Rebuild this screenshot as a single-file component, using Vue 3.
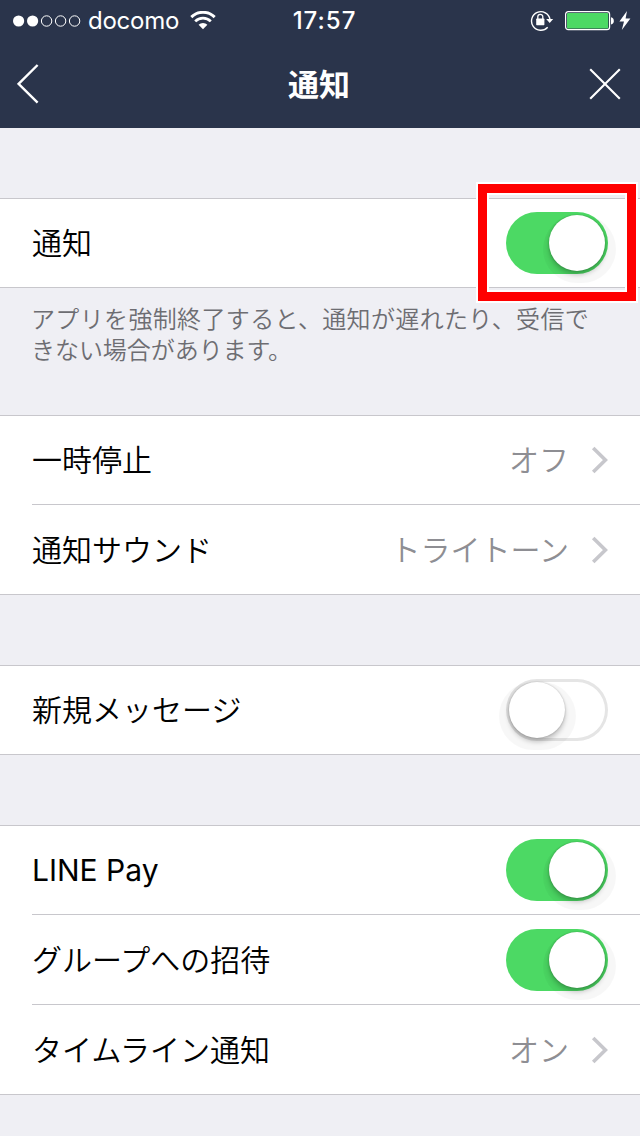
<script setup>
const groups = [
  {
    rows: [{ label: '通知', type: 'switch', on: true, marked: true }],
    note: ['アプリを強制終了すると、通知が遅れたり、受信で', 'きない場合があります。'],
  },
  {
    rows: [
      { label: '一時停止', type: 'link', value: 'オフ' },
      { label: '通知サウンド', type: 'link', value: 'トライトーン' },
    ],
  },
  { rows: [{ label: '新規メッセージ', type: 'switch', on: false }] },
  {
    rows: [
      { label: 'LINE Pay', type: 'switch', on: true, latin: true },
      { label: 'グループへの招待', type: 'switch', on: true },
      { label: 'タイムライン通知', type: 'link', value: 'オン' },
    ],
  },
]
</script>

<template>
  <div class="screen">
    <header class="header">
      <div class="status">
        <div class="carrier">
          <svg class="signal" width="68" height="12" viewBox="0 0 68 12">
            <circle cx="5.6" cy="6" r="5.6" fill="#fff" />
            <circle cx="19.6" cy="6" r="5.6" fill="#fff" />
            <g fill="none" stroke="#fff" stroke-width="1">
              <circle cx="33.6" cy="6" r="5.2" />
              <circle cx="47.6" cy="6" r="5.2" />
              <circle cx="61.6" cy="6" r="5.2" />
            </g>
          </svg>
          <span class="carrier-name">docomo</span>
          <svg class="wifi" width="26" height="19" viewBox="0 0 26 19">
            <g fill="none" stroke="#fff">
              <path d="M1.3 6.1 A16.6 16.6 0 0 1 24.7 6.1" stroke-width="2.9" />
              <path d="M5.2 10.4 A11 11 0 0 1 20.8 10.4" stroke-width="2.7" />
            </g>
            <path d="M8.6 13.8 A6.6 6.6 0 0 1 17.4 13.8 L13 18.2 Z" fill="#fff" />
          </svg>
        </div>
        <span class="clock">17:57</span>
        <div class="power">
          <svg class="lock" width="24" height="22" viewBox="0 0 24 22">
            <path d="M17.7 17.3 A9.3 9.3 0 1 1 20 9.4" fill="none" stroke="#fff" stroke-width="1.4" />
            <path d="M16.2 9 H23.2 L19.7 13 Z" fill="#fff" />
            <rect x="6.2" y="8.6" width="8.2" height="6.6" rx="0.6" fill="#fff" />
            <path d="M7.8 9 V6.8 A2.5 2.5 0 0 1 12.8 6.8 V9" fill="none" stroke="#fff" stroke-width="1.3" />
          </svg>
          <svg class="battery" width="50" height="20" viewBox="0 0 50 20">
            <rect x="0.6" y="0.7" width="44" height="18" rx="2.6" fill="none" stroke="#fff" stroke-width="1.2" />
            <rect x="2" y="2" width="41.2" height="15.4" rx="1" fill="#4cd964" />
            <path d="M46 6.2 C49.8 6.8 49.8 13 46 13.5 Z" fill="#fff" />
          </svg>
          <svg class="bolt" width="12" height="20" viewBox="0 0 12 20">
            <path d="M8 0 L0.4 10.6 H5 L2.8 19 L11.4 7.4 H6.6 Z" fill="#fff" />
          </svg>
        </div>
      </div>
      <div class="nav">
        <svg width="22" height="40" viewBox="0 0 22 40">
          <path d="M20.6 1 L1.6 19.8 L20.6 38.6" fill="none" stroke="#fff" stroke-width="2.4" />
        </svg>
        <h1 class="title">通知</h1>
        <svg class="close" width="32" height="32" viewBox="0 0 32 32">
          <path d="M1.2 1.2 L30.8 30.8 M30.8 1.2 L1.2 30.8" stroke="#fff" stroke-width="2.1" />
        </svg>
      </div>
    </header>

    <main class="settings">
      <section v-for="(group, g) in groups" :key="g" class="group" :class="{ noted: group.note }">
        <div class="card">
          <div v-for="row in group.rows" :key="row.label" class="row">
            <div class="row-inner">
              <span class="label" :class="{ latin: row.latin }">{{ row.label }}</span>
              <div v-if="row.type === 'switch'" class="switch" :class="{ on: row.on }">
                <span class="thumb"></span>
                <span v-if="row.marked" class="marker"></span>
              </div>
              <div v-else class="link">
                <span class="value">{{ row.value }}</span>
                <svg width="17" height="28" viewBox="0 0 17 28">
                  <path d="M2.2 2 L14.4 14 L2.2 26" fill="none" stroke="#c7c7cc" stroke-width="3.6" />
                </svg>
              </div>
            </div>
          </div>
        </div>
        <p v-if="group.note" class="note">
          <span v-for="line in group.note" :key="line" class="note-line">{{ line }}</span>
        </p>
      </section>
    </main>
  </div>
</template>

<style>
body {
  background: #efeff4;
}
</style>

<style scoped>
.screen {
  width: 640px;
  height: 1136px;
  overflow: hidden;
  background: #efeff4;
  color: #000;
  font-family: 'Noto Sans CJK JP', sans-serif;
}
.header {
  height: 128px;
  background: #2a344b;
  color: #fff;
}
.status {
  display: grid;
  grid-template-columns: 1fr auto 1fr;
  align-items: center;
  height: 42px;
  font-family: Inter, sans-serif;
  padding: 0 9px 0 13px;
}
.carrier {
  display: flex;
  align-items: center;
}
.carrier-name {
  margin-left: 7px;
  width: 94px;
  font-size: 24px;
  line-height: 40px;
  letter-spacing: -0.25px;
}
.signal,
.wifi {
  margin-bottom: 1px;
}
.wifi {
  margin-left: 8px;
}
.clock {
  font-size: 24px;
  font-weight: 500;
  line-height: 40px;
  padding-left: 5px;
  letter-spacing: 1px;
}
.power {
  display: flex;
  justify-content: flex-end;
  align-items: center;
}
.battery {
  margin-left: 11px;
}
.bolt {
  margin-left: 4px;
}
.nav {
  display: grid;
  grid-template-columns: 1fr auto 1fr;
  align-items: center;
  box-sizing: border-box;
  height: 86px;
  padding: 0 19px 2px 17px;
}
.close {
  justify-self: end;
}
.title {
  margin: 0;
  padding-bottom: 3px;
  font-size: 31px;
  font-weight: 700;
  line-height: 44px;
}
.settings {
  padding-top: 70px;
}
.group {
  margin-bottom: 70px;
}
.group.noted {
  margin-bottom: 50px;
}
.card {
  background: #fff;
  border-top: 1px solid #c8c7cc;
  border-bottom: 1px solid #c8c7cc;
}
.row {
  padding-left: 32px;
}
.row-inner {
  display: flex;
  align-items: center;
  justify-content: space-between;
  box-sizing: border-box;
  height: 88px;
  padding-right: 32px;
}
.row + .row .row-inner {
  height: 90px;
  padding-top: 1px;
  border-top: 1px solid #c8c7cc;
}
.label {
  padding-bottom: 4px;
  font-size: 30px;
  font-weight: 350;
  line-height: 44px;
}
.label.latin {
  padding-bottom: 0;
  font-family: Inter, sans-serif;
  font-weight: 400;
}
.link {
  display: flex;
  align-items: center;
  gap: 22px;
}
.value {
  padding-bottom: 4px;
  color: #8e8e93;
  font-size: 30px;
  font-weight: 350;
  line-height: 44px;
}
.switch {
  position: relative;
  isolation: isolate;
  box-sizing: border-box;
  display: flex;
  align-items: center;
  width: 102px;
  height: 62px;
  padding: 0 3px;
  border-radius: 31px;
  box-shadow: inset 0 0 0 3px #e5e5e5;
}
.switch.on {
  justify-content: flex-end;
  background: #4cd964;
  box-shadow: none;
}
.thumb {
  position: relative;
  width: 56px;
  height: 56px;
  border-radius: 50%;
  background: #fff;
  box-shadow: 0 0 2px rgba(0, 0, 0, 0.25), 0 4px 5px rgba(0, 0, 0, 0.22);
}
/* wide, faint halo below the thumb */
.thumb::before {
  content: '';
  position: absolute;
  z-index: -1;
  left: -10px;
  right: -11px;
  top: 0;
  bottom: -12px;
  border-radius: 36px;
  background: rgba(0, 0, 0, 0.03);
}
.switch.on .thumb::before {
  left: -6px;
}
.marker {
  position: absolute;
  left: -28px;
  top: -28px;
  box-sizing: border-box;
  width: 158px;
  height: 117px;
  border: 9px solid #f00;
  box-shadow: 0 0 0 2px #fff, inset 0 0 0 2px #fff;
}
.note {
  margin: 0;
  padding: 14px 20px 0 31px;
  color: #6d6d72;
  font-size: 24px;
  font-weight: 350;
  letter-spacing: 0.35px;
}
.note-line {
  display: block;
  height: 31px;
  line-height: 31px;
  white-space: nowrap;
}
.note-line:last-child {
  height: 32px;
  letter-spacing: -0.05px;
}
</style>
